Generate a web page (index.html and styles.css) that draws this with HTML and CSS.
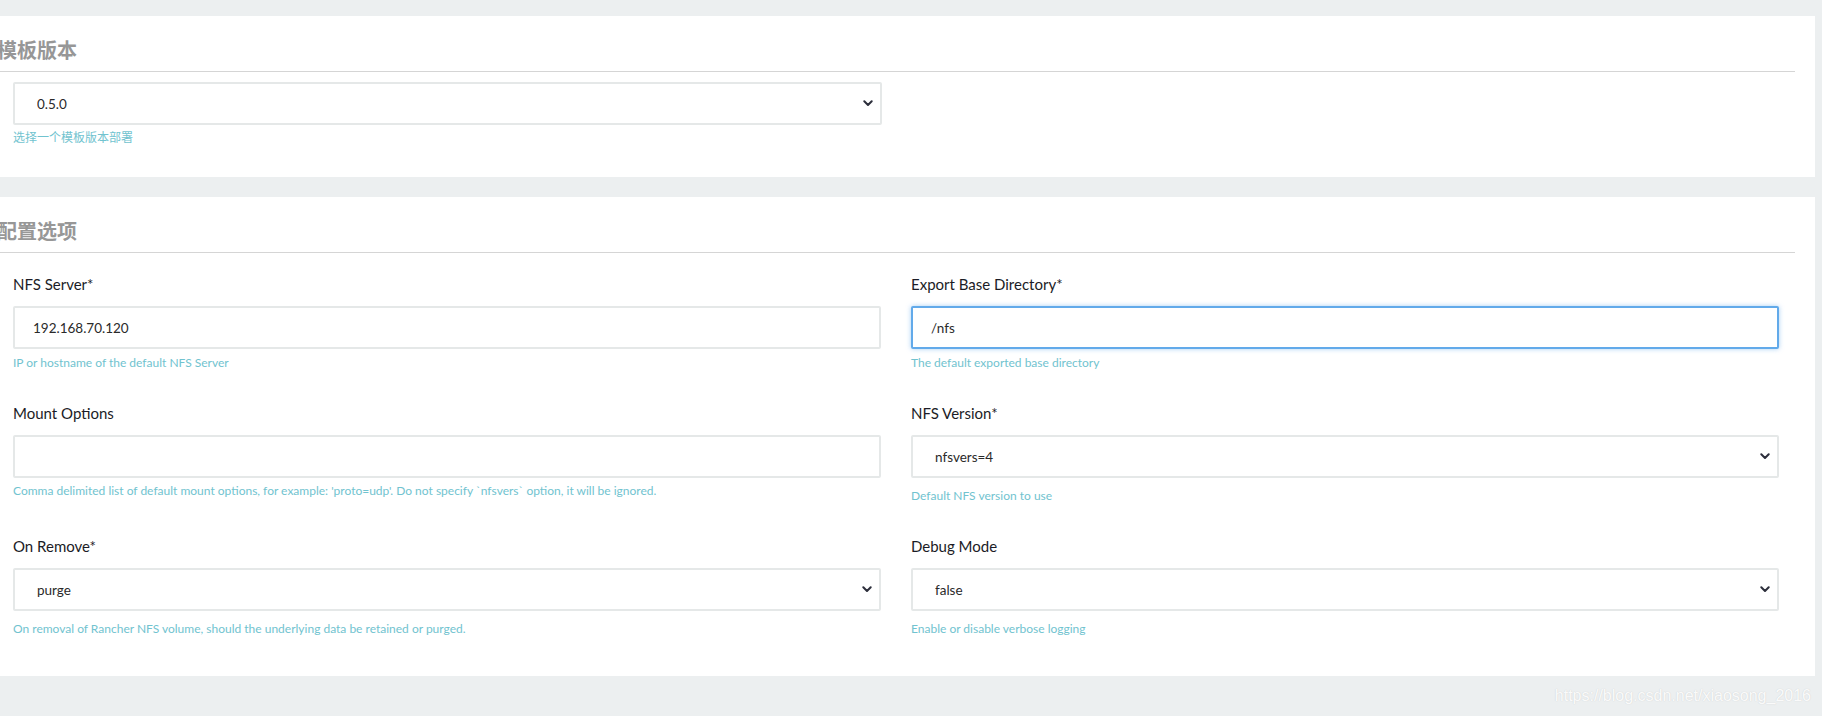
FILE: index.html
```html
<!DOCTYPE html>
<html lang="zh-CN">
<head>
<meta charset="utf-8">
<title>NFS 配置</title>
<link rel="stylesheet" href="styles.css">
</head>
<body>
<div class="page">
  <section class="card card-version">
    <h2 class="card-title">模板版本</h2>
    <div class="single">
      <div class="select-wrap">
        <select class="control select"><option>0.5.0</option></select>
        <svg class="chev" width="10" height="7" viewBox="0 0 10 7"><path d="M1.3 1.3 L5 5 L8.7 1.3" fill="none" stroke="#2c2e3b" stroke-width="2" stroke-linecap="round" stroke-linejoin="round"/></svg>
      </div>
      <p class="help help-tight">选择一个模板版本部署</p>
    </div>
  </section>

  <section class="card card-config">
    <h2 class="card-title">配置选项</h2>
    <div class="grid">
      <div class="field">
        <label class="label">NFS Server*</label>
        <input class="control input" type="text" value="192.168.70.120">
        <p class="help">IP or hostname of the default NFS Server</p>
      </div>
      <div class="field">
        <label class="label">Export Base Directory*</label>
        <input class="control input is-focused" type="text" value="/nfs">
        <p class="help">The default exported base directory</p>
      </div>
      <div class="field">
        <label class="label">Mount Options</label>
        <input class="control input" type="text" value="">
        <p class="help help-tight">Comma delimited list of default mount options, for example: 'proto=udp'. Do not specify `nfsvers` option, it will be ignored.</p>
      </div>
      <div class="field">
        <label class="label">NFS Version*</label>
        <div class="select-wrap">
          <select class="control select"><option>nfsvers=4</option></select>
          <svg class="chev" width="10" height="7" viewBox="0 0 10 7"><path d="M1.3 1.3 L5 5 L8.7 1.3" fill="none" stroke="#2c2e3b" stroke-width="2" stroke-linecap="round" stroke-linejoin="round"/></svg>
        </div>
        <p class="help help-select">Default NFS version to use</p>
      </div>
      <div class="field">
        <label class="label">On Remove*</label>
        <div class="select-wrap">
          <select class="control select"><option>purge</option></select>
          <svg class="chev" width="10" height="7" viewBox="0 0 10 7"><path d="M1.3 1.3 L5 5 L8.7 1.3" fill="none" stroke="#2c2e3b" stroke-width="2" stroke-linecap="round" stroke-linejoin="round"/></svg>
        </div>
        <p class="help help-select">On removal of Rancher NFS volume, should the underlying data be retained or purged.</p>
      </div>
      <div class="field">
        <label class="label">Debug Mode</label>
        <div class="select-wrap">
          <select class="control select"><option>false</option></select>
          <svg class="chev" width="10" height="7" viewBox="0 0 10 7"><path d="M1.3 1.3 L5 5 L8.7 1.3" fill="none" stroke="#2c2e3b" stroke-width="2" stroke-linecap="round" stroke-linejoin="round"/></svg>
        </div>
        <p class="help help-select">Enable or disable verbose logging</p>
      </div>
    </div>
  </section>
</div>
<div class="watermark">https://blog.csdn.net/xiaosong_2016</div>
</body>
</html>
```

FILE: styles.css
```css
html, body {
  margin: 0;
  padding: 0;
  background: #eceff0;
}
body {
  position: relative;
  min-height: 716px;
  overflow: hidden;
  font-family: Lato, "Noto Sans CJK SC", sans-serif;
  color: #222;
}
.page {
  padding-top: 16px;
}
.card {
  background: #fff;
  margin-right: 7px;
  padding-right: 20px;
}
.card-version {
  height: 161px;
}
.card-config {
  margin-top: 20px;
  height: 479px;
}
.card-title {
  margin: 0;
  padding: 22px 0 9px 0;
  font-size: 20px;
  line-height: 24px;
  font-weight: 700;
  color: #979797;
  text-indent: -3px;
  border-bottom: 1px solid #d5d5d5;
  font-family: "Noto Sans CJK SC", sans-serif;
}
.single {
  width: 869px;
  padding-left: 13px;
  padding-top: 10px;
}
.grid {
  display: grid;
  grid-template-columns: 1fr 1fr;
  column-gap: 30px;
  row-gap: 32px;
  padding: 21px 16px 0 13px;
}
.field {
  display: flex;
  flex-direction: column;
}
.label {
  display: block;
  font-size: 15px;
  line-height: 20px;
  color: #1b1c26;
  margin-bottom: 12px;
}
.select-wrap {
  position: relative;
}
.control {
  display: block;
  box-sizing: border-box;
  width: 100%;
  height: 43px;
  margin: 0;
  border: 2px solid #e5e8e8;
  border-radius: 2px;
  background: #fff;
  font-family: Lato, sans-serif;
  font-size: 13.5px;
  color: #2a2a2a;
  outline: none;
}
.input {
  padding: 0 18px;
}
.select {
  -webkit-appearance: none;
  appearance: none;
  padding: 0 30px 0 22px;
}
.is-focused {
  border-color: #62aaea;
  box-shadow: 0 0 5px rgba(98, 170, 234, 0.55);
}
.chev {
  position: absolute;
  right: 9px;
  top: 18px;
  pointer-events: none;
}
.help {
  margin: 6px 0 0 0;
  font-size: 12px;
  line-height: 16px;
  color: #71c3cf;
}
.help-tight {
  margin-top: 5px;
}
.help-select {
  margin-top: 10px;
}
.watermark {
  position: absolute;
  right: 11px;
  top: 687px;
  font-family: "Liberation Sans", Arial, sans-serif;
  font-size: 16px;
  color: rgba(255, 255, 255, 0.92);
  text-shadow: 0 0 1px rgba(120, 120, 120, 0.3);
}
```
